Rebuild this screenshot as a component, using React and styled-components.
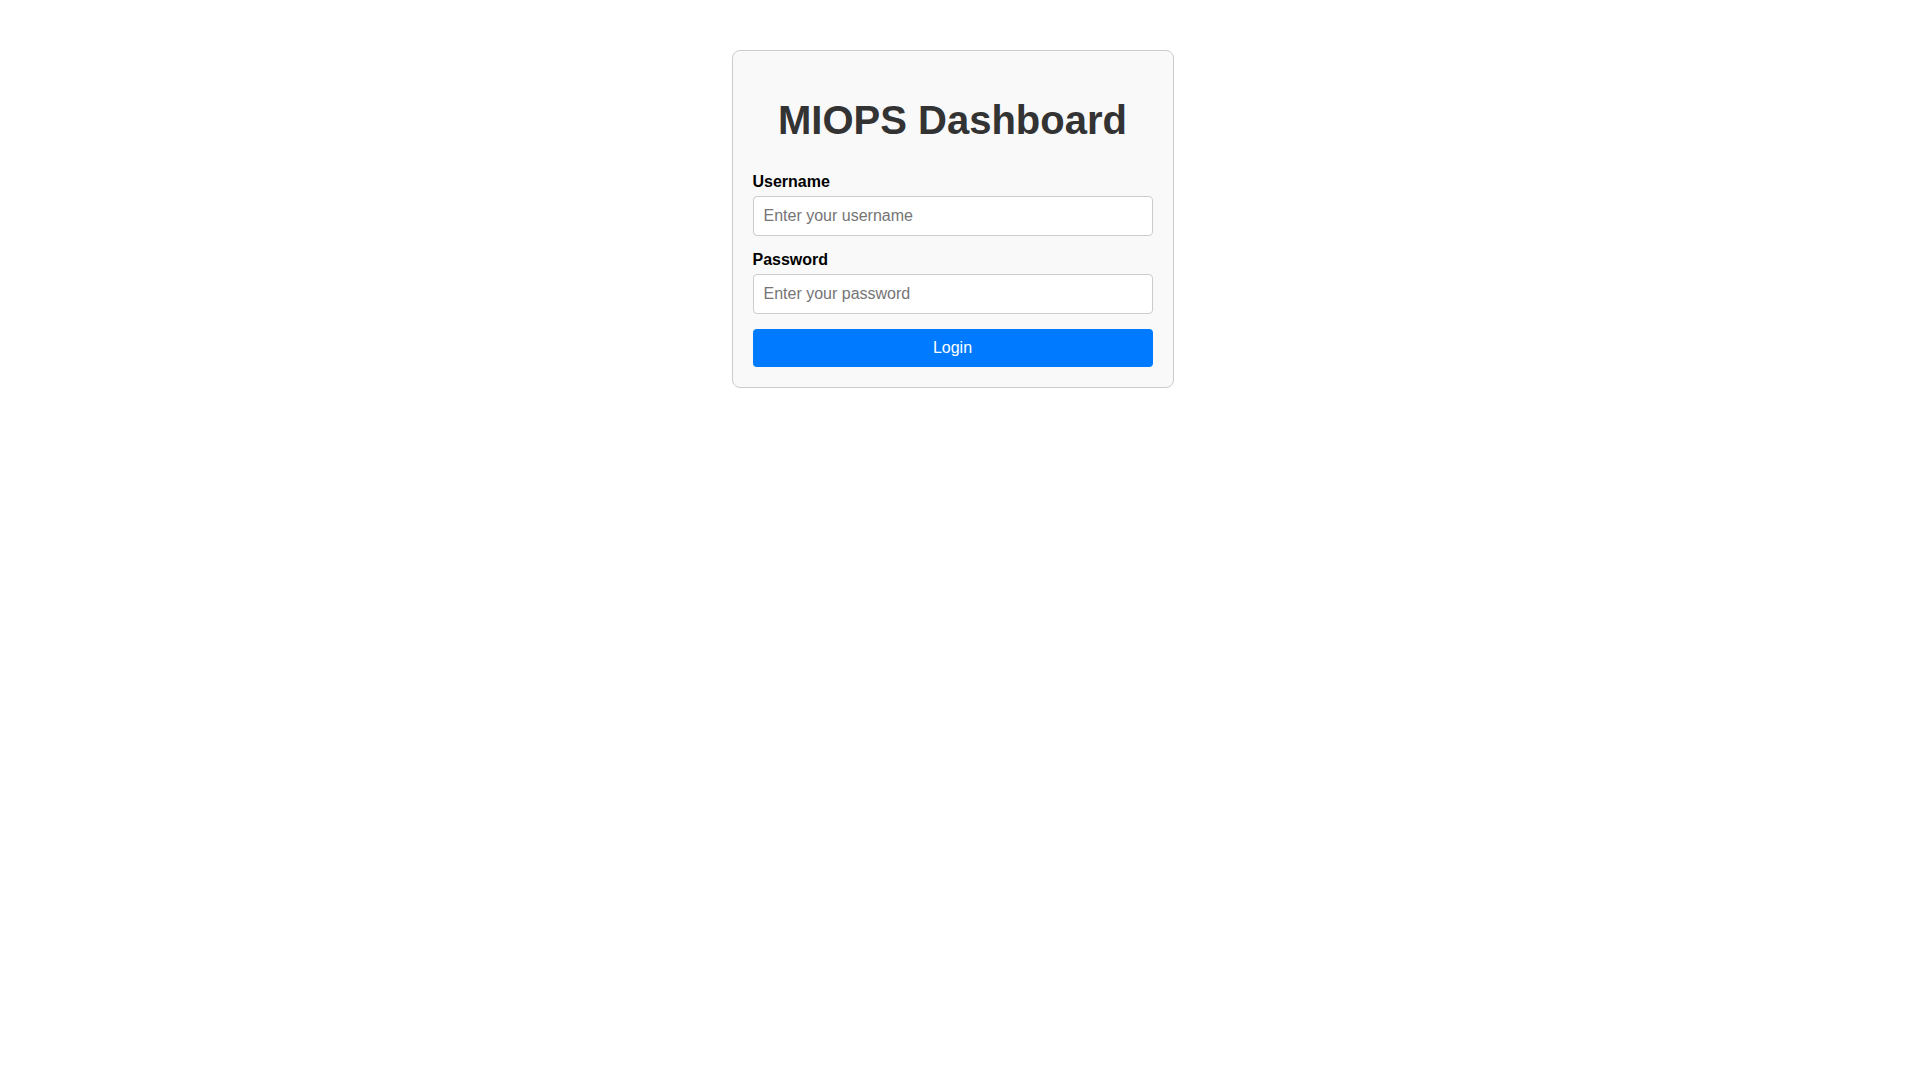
import React from "react";
import styled, { createGlobalStyle } from "styled-components";

// the reference has a 15px classic scrollbar on the right; keep that gutter so the card centres the same
const GlobalStyle = createGlobalStyle`
  html, body {
    margin: 0;
    min-height: 100vh;
  }

  body {
    padding-right: 15px;
    font-family: "Liberation Sans", Arial, sans-serif;
    background: #fff;
  }
`;

function App() {
  return (
    <>
      <GlobalStyle />
      <LoginCard>
        <Title>MIOPS Dashboard</Title>
        <form onSubmit={(e) => e.preventDefault()}>
          <FormGroup>
            <Label htmlFor="username">Username</Label>
            <Input id="username" type="text" placeholder="Enter your username" />
          </FormGroup>
          <FormGroup>
            <Label htmlFor="password">Password</Label>
            <Input id="password" type="password" placeholder="Enter your password" />
          </FormGroup>
          <LoginButton type="submit">Login</LoginButton>
        </form>
      </LoginCard>
    </>
  );
}

const LoginCard = styled.div`
  max-width: 400px;
  margin: 50px auto;
  padding: 20px;
  border: 1px solid #ccc;
  border-radius: 8px;
  background: #f9f9f9;
`;

const Title = styled.h1`
  text-align: center;
  color: #333;
  font-size: 40px;
  font-weight: 700;
  margin: 27px 0 30px;
`;

const FormGroup = styled.div`
  margin-bottom: 15px;
`;

const Label = styled.label`
  display: block;
  margin-bottom: 5px;
  font-size: 16px;
  font-weight: 700;
  color: #000;
`;

const Input = styled.input`
  display: block;
  width: 100%;
  box-sizing: border-box;
  padding: 10px;
  font-family: "Liberation Sans", Arial, sans-serif;
  font-size: 16px;
  color: #333;
  background: #fff;
  border: 1px solid #ccc;
  border-radius: 4px;
  outline: none;

  &::placeholder {
    color: #757575;
  }
`;

const LoginButton = styled.button`
  display: block;
  width: 100%;
  padding: 10px;
  font-family: "Liberation Sans", Arial, sans-serif;
  font-size: 16px;
  line-height: 18px;
  color: #fff;
  background: #007bff;
  border: none;
  border-radius: 4px;
  cursor: pointer;

  &:hover {
    background: #0069d9;
  }
`;

export default App;
